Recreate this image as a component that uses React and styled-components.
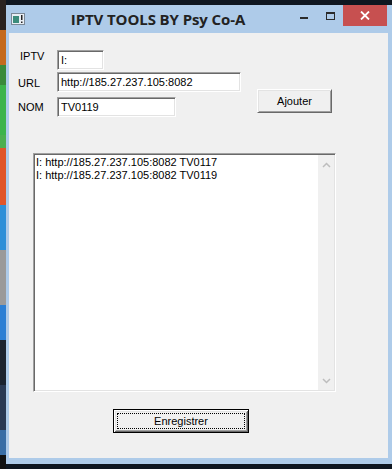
import React from 'react';
import styled, { createGlobalStyle } from 'styled-components';

const GlobalStyle = createGlobalStyle`
  html, body {
    margin: 0;
    padding: 0;
  }
  body {
    width: 392px;
    height: 469px;
    overflow: hidden;
    background: #101820;
    font-family: "Liberation Sans", Arial, sans-serif;
  }
`;

const Desktop = styled.div`
  width: 392px;
  height: 469px;
  display: flex;
  background: #101820;
`;

const Wallpaper = styled.div`
  width: 6px;
  display: flex;
  flex-direction: column;
`;

const Stripe = styled.div`
  height: ${p => p.$h}px;
  background: ${p => p.$c};
`;

const Screen = styled.div`
  flex: 1;
  display: flex;
  flex-direction: column;
`;

const Edge = styled.div`
  height: 5px;
  background: #0e1620;
`;

const Window = styled.div`
  flex: 1;
  display: flex;
  flex-direction: column;
  background: #aecbe9;
  padding: 0 4px 6px 3px;
`;

const TitleBar = styled.div`
  height: 28px;
  display: flex;
  align-items: flex-start;
`;

const AppIcon = styled.svg`
  margin: 8px 0 0 2px;
  width: 14px;
  height: 12px;
`;

const Title = styled.div`
  flex: 1;
  text-align: center;
  line-height: 28px;
  font-family: "Open Sans", "Noto Sans", sans-serif;
  font-weight: 700;
  font-size: 15px;
  letter-spacing: -0.1px;
  color: #222;
`;

const CaptionButton = styled.div`
  width: ${p => p.$w}px;
  height: 21px;
  display: flex;
  align-items: center;
  justify-content: center;
  background: ${p => p.$bg || 'transparent'};
  margin-right: ${p => p.$mr || 0}px;
`;

const Client = styled.div`
  flex: 1;
  display: flex;
  flex-direction: column;
  align-items: flex-start;
  background: #f0f0f0;
  padding: 17px 0 0 9px;
`;

const Form = styled.div`
  display: grid;
  grid-template-columns: 39px 184px 16px 75px;
  grid-template-rows: 20px 22px 25px;
`;

const Label = styled.div`
  grid-column: 1;
  grid-row: ${p => p.$row};
  align-self: ${p => (p.$row === 1 ? 'start' : 'end')};
  margin: 0 0 ${p => p.$mb || 0}px ${p => p.$ml || 0}px;
  font-size: 11px;
  line-height: 13px;
  color: #000;
`;

const Field = styled.input`
  grid-column: 2;
  grid-row: ${p => p.$row};
  align-self: end;
  width: ${p => p.$w}px;
  height: 20px;
  box-sizing: border-box;
  margin: 0;
  padding: 0 3px;
  border: 1px solid;
  border-color: #a0a0a0 #fff #fff #a0a0a0;
  box-shadow: inset 1px 1px #696969, inset -1px -1px #e3e3e3;
  background: #fff;
  font: 11px "Liberation Sans", Arial, sans-serif;
  color: #000;
  outline: none;
`;

const Button = styled.button`
  grid-column: 4;
  grid-row: 2 / span 2;
  align-self: end;
  margin: 0 0 4px 0;
  width: 75px;
  height: 24px;
  box-sizing: border-box;
  padding: 0;
  border: 1px solid;
  border-color: #fff #696969 #696969 #fff;
  box-shadow: inset 1px 1px #e3e3e3, inset -1px -1px #a0a0a0;
  background: #f0f0f0;
  font: 11px "Liberation Sans", Arial, sans-serif;
  color: #000;
`;

const ListBox = styled.div`
  margin: 36px 0 0 15px;
  width: 303px;
  height: 239px;
  box-sizing: border-box;
  display: flex;
  border: 1px solid;
  border-color: #a0a0a0 #fff #fff #a0a0a0;
  box-shadow: inset 1px 1px #696969, inset -1px -1px #e3e3e3;
  background: #fff;
`;

const Lines = styled.div`
  flex: 1;
  padding: 2px 0 0 2px;
`;

const Line = styled.div`
  font-size: 11px;
  line-height: 13px;
  color: #000;
  white-space: nowrap;
`;

const ScrollBar = styled.div`
  width: 16px;
  margin: 1px 1px 1px 0;
  display: flex;
  flex-direction: column;
  justify-content: space-between;
  align-items: center;
  padding: 7px 0 6px;
  background: #f0f0f0;
`;

const Save = styled.button`
  margin: 17px 0 0 95px;
  width: 136px;
  height: 24px;
  box-sizing: border-box;
  padding: 3px;
  display: flex;
  border: 1px solid #000;
  box-shadow: inset 1px 1px #fff, inset -1px -1px #696969, inset 2px 2px #e3e3e3, inset -2px -2px #a0a0a0;
  background: #f0f0f0;
  font: 11px "Liberation Sans", Arial, sans-serif;
  color: #000;
`;

const FocusRect = styled.span`
  flex: 1;
  display: flex;
  align-items: center;
  justify-content: center;
  border: 1px dotted #000;
`;

const stripes = [
  [30, '#2a2320'], [35, '#c46a1e'], [20, '#3a8a3a'], [50, '#3cb44b'], [13, '#4caf50'],
  [57, '#e0552a'], [45, '#2d8fd8'], [55, '#9a9a9a'], [35, '#2b7fd4'], [45, '#1b2330'],
  [45, '#2a3a55'], [25, '#3a6ea5'], [14, '#111'],
];

const entries = [
  'I: http://185.27.237.105:8082 TV0117',
  'I: http://185.27.237.105:8082 TV0119',
];

export default function App() {
  return (
    <>
      <GlobalStyle />
      <Desktop>
        <Wallpaper>
          {stripes.map(([h, c], i) => <Stripe key={i} $h={h} $c={c} />)}
        </Wallpaper>
        <Screen>
          <Edge />
          <Window>
            <TitleBar>
              <AppIcon viewBox="0 0 14 12">
                <rect x="0.5" y="0.5" width="13" height="11" fill="#e8eef4" stroke="#7a8896" />
                <rect x="2" y="3" width="6" height="7" fill="#3c8c7c" />
                <rect x="10" y="2" width="1.5" height="5" fill="#222" />
                <rect x="10" y="8.5" width="1.5" height="1.5" fill="#222" />
              </AppIcon>
              <Title>IPTV TOOLS BY Psy Co-A</Title>
              <CaptionButton $w={26}>
                <svg width="8" height="8" viewBox="0 0 8 8">
                  <rect x="0" y="5" width="8" height="2" fill="#2b2b2b" />
                </svg>
              </CaptionButton>
              <CaptionButton $w={26}>
                <svg width="9" height="8" viewBox="0 0 9 8">
                  <rect x="0.5" y="1" width="8" height="6.5" fill="none" stroke="#2b2b2b" />
                  <rect x="0" y="0" width="9" height="2" fill="#2b2b2b" />
                </svg>
              </CaptionButton>
              <CaptionButton $w={44} $bg="#c75050" $mr={1}>
                <svg width="10" height="9" viewBox="0 0 10 9">
                  <path d="M1 0.5 L9 8.5 M9 0.5 L1 8.5" stroke="#fff" strokeWidth="1.8" />
                </svg>
              </CaptionButton>
            </TitleBar>
            <Client>
              <Form>
                <Label $row={1} $ml={2}>IPTV</Label>
                <Field $row={1} $w={47} defaultValue="I:" />
                <Label $row={2} $mb={2}>URL</Label>
                <Field $row={2} $w={184} defaultValue="http://185.27.237.105:8082" />
                <Label $row={3} $mb={3}>NOM</Label>
                <Field $row={3} $w={119} defaultValue="TV0119" />
                <Button>Ajouter</Button>
              </Form>
              <ListBox>
                <Lines>
                  {entries.map((e, i) => <Line key={i}>{e}</Line>)}
                </Lines>
                <ScrollBar>
                  <svg width="9" height="6" viewBox="0 0 9 6">
                    <path d="M1 5 L4.5 1.5 L8 5" fill="none" stroke="#bdbdbd" strokeWidth="1.5" />
                  </svg>
                  <svg width="9" height="6" viewBox="0 0 9 6">
                    <path d="M1 1 L4.5 4.5 L8 1" fill="none" stroke="#bdbdbd" strokeWidth="1.5" />
                  </svg>
                </ScrollBar>
              </ListBox>
              <Save>
                <FocusRect>Enregistrer</FocusRect>
              </Save>
            </Client>
          </Window>
          <Edge />
        </Screen>
      </Desktop>
    </>
  );
}
